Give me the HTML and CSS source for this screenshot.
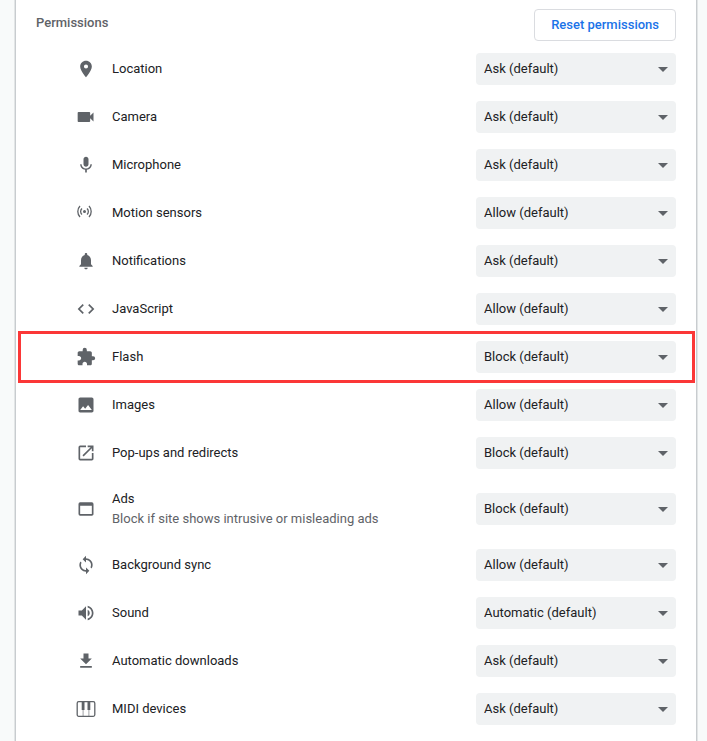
FILE: index.html
```html
<!DOCTYPE html>
<html lang="en">
<head>
<meta charset="utf-8">
<title>Site permissions</title>
<link rel="stylesheet" href="styles.css">
</head>
<body>
<main class="card">
  <header class="header">
    <h2 class="title">Permissions</h2>
    <button class="reset" type="button">Reset permissions</button>
  </header>
  <ul class="list">
    <li class="row">
      <svg class="icon" viewBox="0 0 24 24" aria-hidden="true"><path d="M12 2C8.130 2 5 5.130 5 9c0 5.250 7 13 7 13s7-7.750 7-13c0-3.870-3.130-7-7-7zm0 9.500a2.500 2.500 0 1 1 0-5 2.500 2.500 0 0 1 0 5z"/></svg>
      <label class="label" for="location">Location</label>
      <span class="picker"><select id="location"><option>Ask (default)</option><option>Allow</option><option>Block</option></select></span>
    </li>
    <li class="row">
      <svg class="icon" viewBox="0 0 24 24" aria-hidden="true"><path d="M17 10.500V7c0-.55-.45-1-1-1H3c-.55 0-1 .45-1 1v10c0 .55.45 1 1 1h13c.55 0 1-.45 1-1v-3.500l4 4v-11l-4 4z"/></svg>
      <label class="label" for="camera">Camera</label>
      <span class="picker"><select id="camera"><option>Ask (default)</option><option>Allow</option><option>Block</option></select></span>
    </li>
    <li class="row">
      <svg class="icon" viewBox="0 0 24 24" aria-hidden="true"><path d="M12 14c1.660 0 2.990-1.340 2.990-3L15 5c0-1.660-1.340-3-3-3S9 3.340 9 5v6c0 1.660 1.340 3 3 3zm5.300-3c0 3-2.540 5.100-5.300 5.100S6.700 14 6.700 11H5c0 3.410 2.720 6.230 6 6.720V21h2v-3.280c3.280-.48 6-3.300 6-6.720h-1.700z"/></svg>
      <label class="label" for="microphone">Microphone</label>
      <span class="picker"><select id="microphone"><option>Ask (default)</option><option>Allow</option><option>Block</option></select></span>
    </li>
    <li class="row">
      <svg class="icon line" viewBox="0 0 20 20" aria-hidden="true"><circle class="solid" cx="8.500" cy="8.500" r="1.500"/><path d="M6 5.500a4 4 0 0 0 0 6M11 5.500a4 4 0 0 1 0 6M4 3a8 8 0 0 0 0 11M13 3a8 8 0 0 1 0 11"/></svg>
      <label class="label" for="sensors">Motion sensors</label>
      <span class="picker"><select id="sensors"><option>Allow (default)</option><option>Block</option></select></span>
    </li>
    <li class="row">
      <svg class="icon" viewBox="0 0 24 24" aria-hidden="true"><path d="M12 22c1.100 0 2-.9 2-2h-4c0 1.100.9 2 2 2zm6-6v-5c0-3.070-1.640-5.640-4.500-6.320V4c0-.83-.67-1.500-1.500-1.500s-1.500.67-1.500 1.500v.68C7.630 5.360 6 7.920 6 11v5l-2 2v1h16v-1l-2-2z"/></svg>
      <label class="label" for="notifications">Notifications</label>
      <span class="picker"><select id="notifications"><option>Ask (default)</option><option>Allow</option><option>Block</option></select></span>
    </li>
    <li class="row">
      <svg class="icon" viewBox="0 0 24 24" aria-hidden="true"><path d="M9.400 16.600 4.800 12l4.600-4.600L8 6l-6 6 6 6 1.400-1.400zm5.200 0 4.600-4.600-4.600-4.600L16 6l6 6-6 6-1.400-1.400z"/></svg>
      <label class="label" for="javascript">JavaScript</label>
      <span class="picker"><select id="javascript"><option>Allow (default)</option><option>Block</option></select></span>
    </li>
    <li class="row marked">
      <svg class="icon" viewBox="0 0 24 24" aria-hidden="true"><path d="M20.500 11H19V7c0-1.100-.9-2-2-2h-4V3.500a2.500 2.500 0 0 0-5 0V5H4c-1.100 0-1.990.9-1.990 2v3.800H3.500c1.490 0 2.700 1.210 2.700 2.700s-1.210 2.700-2.700 2.700H2V20c0 1.100.9 2 2 2h3.800v-1.500c0-1.490 1.210-2.700 2.700-2.700s2.700 1.210 2.700 2.700V22H17c1.100 0 2-.9 2-2v-4h1.500a2.500 2.500 0 0 0 0-5z"/></svg>
      <label class="label" for="flash">Flash</label>
      <span class="picker"><select id="flash"><option>Block (default)</option><option>Ask</option></select></span>
    </li>
    <li class="row">
      <svg class="icon" viewBox="0 0 24 24" aria-hidden="true"><path d="M21 19V5c0-1.100-.9-2-2-2H5c-1.100 0-2 .9-2 2v14c0 1.100.9 2 2 2h14c1.100 0 2-.9 2-2zM8.500 13.500l2.500 3.010L14.500 12l4.500 6H5l3.500-4.500z"/></svg>
      <label class="label" for="images">Images</label>
      <span class="picker"><select id="images"><option>Allow (default)</option><option>Block</option></select></span>
    </li>
    <li class="row">
      <svg class="icon" viewBox="0 0 24 24" aria-hidden="true"><path d="M19 19H5V5h7V3H5a2 2 0 0 0-2 2v14a2 2 0 0 0 2 2h14c1.100 0 2-.9 2-2v-7h-2v7zM14 3v2h3.590l-9.830 9.830 1.410 1.410L19 6.410V10h2V3h-7z"/></svg>
      <label class="label" for="popups">Pop-ups and redirects</label>
      <span class="picker"><select id="popups"><option>Block (default)</option><option>Allow</option></select></span>
    </li>
    <li class="row tall">
      <svg class="icon" viewBox="0 0 24 24" aria-hidden="true"><path d="M19 4H5a2 2 0 0 0-2 2v12a2 2 0 0 0 2 2h14c1.100 0 2-.9 2-2V6a2 2 0 0 0-2-2zm0 14H5V8h14v10z"/></svg>
      <label class="label" for="ads">Ads<span class="note">Block if site shows intrusive or misleading ads</span></label>
      <span class="picker"><select id="ads"><option>Block (default)</option><option>Allow</option></select></span>
    </li>
    <li class="row">
      <svg class="icon" viewBox="0 0 24 24" aria-hidden="true"><path d="M12 4V1L8 5l4 4V6c3.310 0 6 2.690 6 6 0 1.010-.25 1.970-.7 2.800l1.460 1.460A7.930 7.930 0 0 0 20 12c0-4.420-3.580-8-8-8zm0 14c-3.310 0-6-2.690-6-6 0-1.010.25-1.970.7-2.800L5.240 7.740A7.930 7.930 0 0 0 4 12c0 4.420 3.580 8 8 8v3l4-4-4-4v3z"/></svg>
      <label class="label" for="sync">Background sync</label>
      <span class="picker"><select id="sync"><option>Allow (default)</option><option>Block</option></select></span>
    </li>
    <li class="row">
      <svg class="icon" viewBox="0 0 24 24" aria-hidden="true"><path d="M3 9v6h4l5 5V4L7 9H3zm13.500 3A4.500 4.500 0 0 0 14 7.970v8.050c1.480-.73 2.500-2.250 2.500-4.020zM14 3.230v2.060c2.890.86 5 3.540 5 6.710s-2.110 5.850-5 6.710v2.060c4.010-.91 7-4.490 7-8.770s-2.990-7.860-7-8.770z"/></svg>
      <label class="label" for="sound">Sound</label>
      <span class="picker"><select id="sound"><option>Automatic (default)</option><option>Allow</option><option>Mute</option></select></span>
    </li>
    <li class="row">
      <svg class="icon" viewBox="0 0 24 24" aria-hidden="true"><path d="M19 9h-4V3H9v6H5l7 7 7-7zM5 18v2h14v-2H5z"/></svg>
      <label class="label" for="downloads">Automatic downloads</label>
      <span class="picker"><select id="downloads"><option>Ask (default)</option><option>Allow</option><option>Block</option></select></span>
    </li>
    <li class="row">
      <svg class="icon line" viewBox="0 0 20 20" aria-hidden="true"><rect x="1.200" y="2.700" width="17.600" height="14.600" rx="1.500"/><path class="solid" d="M5.700 3h2.800v8H5.700zM11.500 3h2.800v8h-2.800z"/><path stroke-width=".6" d="M7.100 11v6M12.900 11v6"/></svg>
      <label class="label" for="midi">MIDI devices</label>
      <span class="picker"><select id="midi"><option>Ask (default)</option><option>Allow</option><option>Block</option></select></span>
    </li>
  </ul>
</main>
</body>
</html>
```
FILE: styles.css
```css
* {
  box-sizing: border-box;
}

body {
  margin: 0;
  padding: 0 11px 0 16px;
  background: #f8fafa;
  color: #202124;
  font: 13px/20px Roboto, "Liberation Sans", sans-serif;
}

.card {
  min-height: 100vh;
  padding: 0 20px 8px;
  background: #fff;
  box-shadow: 0 0 0 1px #c8cccf, 0 0 0 2px #e2e5e6;
}

.header {
  display: flex;
  justify-content: space-between;
  height: 45px;
  padding-top: 9px;
}

.title {
  margin: 4px 0 0;
  color: #5f6368;
  font-size: 13px;
  font-weight: 500;
}

.reset {
  height: 32px;
  padding: 0 16px;
  border: 1px solid #dadce0;
  border-radius: 4px;
  background: #fff;
  color: #1a73e8;
  font: inherit;
  font-weight: 500;
}

.list {
  margin: 0;
  padding: 0;
  list-style: none;
}

.row {
  position: relative;
  display: flex;
  align-items: center;
  gap: 16px;
  height: 48px;
  padding-left: 40px;
}

.tall {
  height: 64px;
}

.marked::after {
  content: "";
  position: absolute;
  inset: -2px -19px -2px -18px;
  border: 3px solid #fb3737;
  pointer-events: none;
}

.icon {
  flex: none;
  width: 20px;
  height: 20px;
  fill: #5f6368;
}

.line {
  fill: none;
  stroke: #5f6368;
  stroke-width: 1.3;
}

.solid {
  fill: #5f6368;
  stroke: none;
}

.label {
  flex: 1;
}

.note {
  display: block;
  color: #5f6368;
}

.picker {
  position: relative;
  flex: none;
  width: 200px;
}

.picker::after {
  content: "";
  position: absolute;
  top: 14px;
  right: 8px;
  border: 5px solid transparent;
  border-top-color: #5f6368;
  border-bottom: 0;
  pointer-events: none;
}

select {
  display: block;
  width: 100%;
  height: 32px;
  padding: 0 24px 0 8px;
  border: 0;
  border-radius: 4px;
  appearance: none;
  background: #f0f2f3;
  color: inherit;
  font: inherit;
}
```
